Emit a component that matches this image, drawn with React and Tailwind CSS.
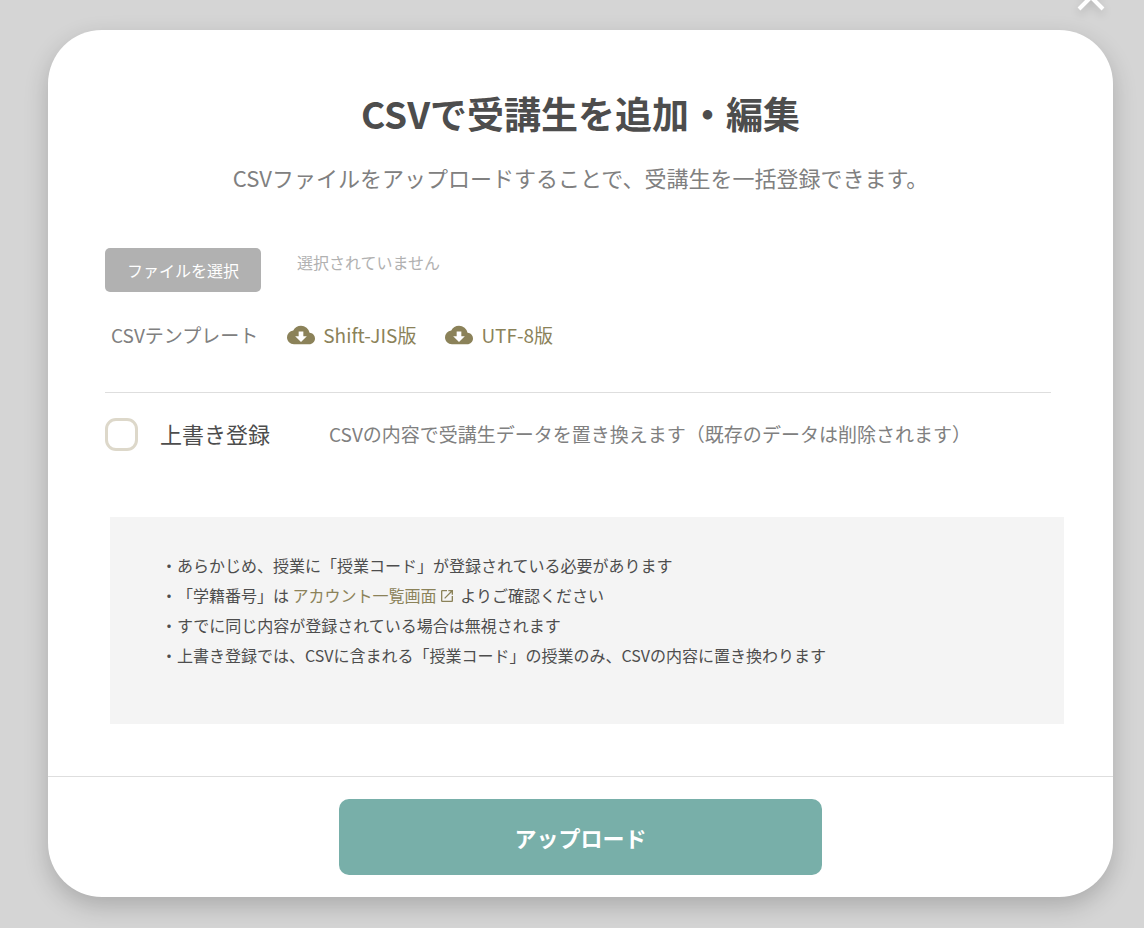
import { useRef, useState } from 'react';
import { MdCloudDownload, MdOpenInNew } from 'react-icons/md';

const templates = [
  { label: 'Shift-JIS版', href: '#shift-jis' },
  { label: 'UTF-8版', href: '#utf-8' },
];

function CloseButton() {
  return (
    <button
      type="button"
      aria-label="閉じる"
      className="absolute -top-[17px] right-[39px] h-7 w-7 text-white drop-shadow-lg"
    >
      <svg viewBox="0 0 28 28" className="h-7 w-7" fill="none" stroke="currentColor" strokeWidth="4">
        <path d="M2 2l24 24M26 2L2 26" />
      </svg>
    </button>
  );
}

function FilePicker() {
  const inputRef = useRef(null);
  const [fileName, setFileName] = useState('');

  return (
    <div className="flex items-start gap-9">
      <button
        type="button"
        onClick={() => inputRef.current.click()}
        className="h-11 w-39 rounded-[5px] bg-[#b1b1b1] text-base text-white"
      >
        ファイルを選択
      </button>
      <input
        ref={inputRef}
        type="file"
        accept=".csv"
        aria-label="CSVファイル"
        className="hidden"
        onChange={(e) => setFileName(e.target.files[0]?.name || '')}
      />
      <p className="text-base leading-7 text-[#b1b1b1]">{fileName || '選択されていません'}</p>
    </div>
  );
}

function TemplateLinks() {
  return (
    <div className="mt-[29px] flex items-center gap-[29px] pl-1.5 text-[19px] leading-7">
      <span className="text-[#808080]">CSVテンプレート</span>
      {templates.map((t) => (
        <a key={t.label} href={t.href} className="flex items-center gap-2 text-[#8b8259]">
          <MdCloudDownload className="h-7 w-7" />
          {t.label}
        </a>
      ))}
    </div>
  );
}

function Notes() {
  return (
    <ul className="mt-[66px] -mr-2 ml-[5px] bg-[#f4f4f4] pt-[33px] pr-8 pb-[54px] pl-[51px] text-base leading-[30px] text-[#4d4d4d] [text-spacing-trim:space-all]">
      <li>・あらかじめ、授業に「授業コード」が登録されている必要があります</li>
      <li>
        ・「学籍番号」は{' '}
        <a href="#accounts" className="text-[#8b8259]">
          アカウント一覧画面
          <MdOpenInNew className="mx-0.5 inline h-4 w-4 align-[-2px]" />
        </a>{' '}
        よりご確認ください
      </li>
      <li>・すでに同じ内容が登録されている場合は無視されます</li>
      <li>・上書き登録では、CSVに含まれる「授業コード」の授業のみ、CSVの内容に置き換わります</li>
    </ul>
  );
}

export default function App() {
  const [overwrite, setOverwrite] = useState(false);

  return (
    <div className="relative min-h-screen overflow-hidden bg-[#d5d5d5] pt-[30px] pr-[31px] pb-[31px] pl-12 font-['Noto_Sans_CJK_JP',sans-serif]">
      <CloseButton />
      <form
        role="dialog"
        aria-labelledby="dialog-title"
        onSubmit={(e) => e.preventDefault()}
        className="rounded-[54px] bg-white shadow-[0_9px_24px_rgba(0,0,0,0.2)]"
      >
        <div className="px-[57px] pt-[55px] pb-[52px]">
          <header className="text-center">
            <h1 id="dialog-title" className="text-[37px] leading-14 font-bold text-[#4d4d4d]">
              CSVで受講生を追加・編集
            </h1>
            <p className="mt-5 mb-[55px] text-[22px] leading-8 text-[#808080]">
              CSVファイルをアップロードすることで、受講生を一括登録できます。
            </p>
          </header>

          <FilePicker />
          <TemplateLinks />

          <hr className="mt-[43px] mr-[5px] border-[#dedede]" />

          <div className="mt-[25px] flex items-start">
            <input
              id="overwrite"
              type="checkbox"
              checked={overwrite}
              onChange={(e) => setOverwrite(e.target.checked)}
              className="h-[33px] w-[33px] shrink-0 appearance-none rounded-[11px] border-3 border-[#ddd8ca] checked:bg-[#8b8259]"
            />
            <label htmlFor="overwrite" className="ml-[22px] text-[22px] leading-[30px] text-[#4d4d4d]">
              上書き登録
            </label>
            <p className="ml-[59px] text-[19px] leading-8 text-[#808080]">
              CSVの内容で受講生データを置き換えます（既存のデータは削除されます）
            </p>
          </div>

          <Notes />
        </div>

        <footer className="flex justify-center border-t border-[#dedede] py-[22px]">
          <button
            type="submit"
            className="h-[76px] w-[483px] rounded-[10px] bg-[#78afa9] text-[22px] font-bold text-white"
          >
            アップロード
          </button>
        </footer>
      </form>
    </div>
  );
}
